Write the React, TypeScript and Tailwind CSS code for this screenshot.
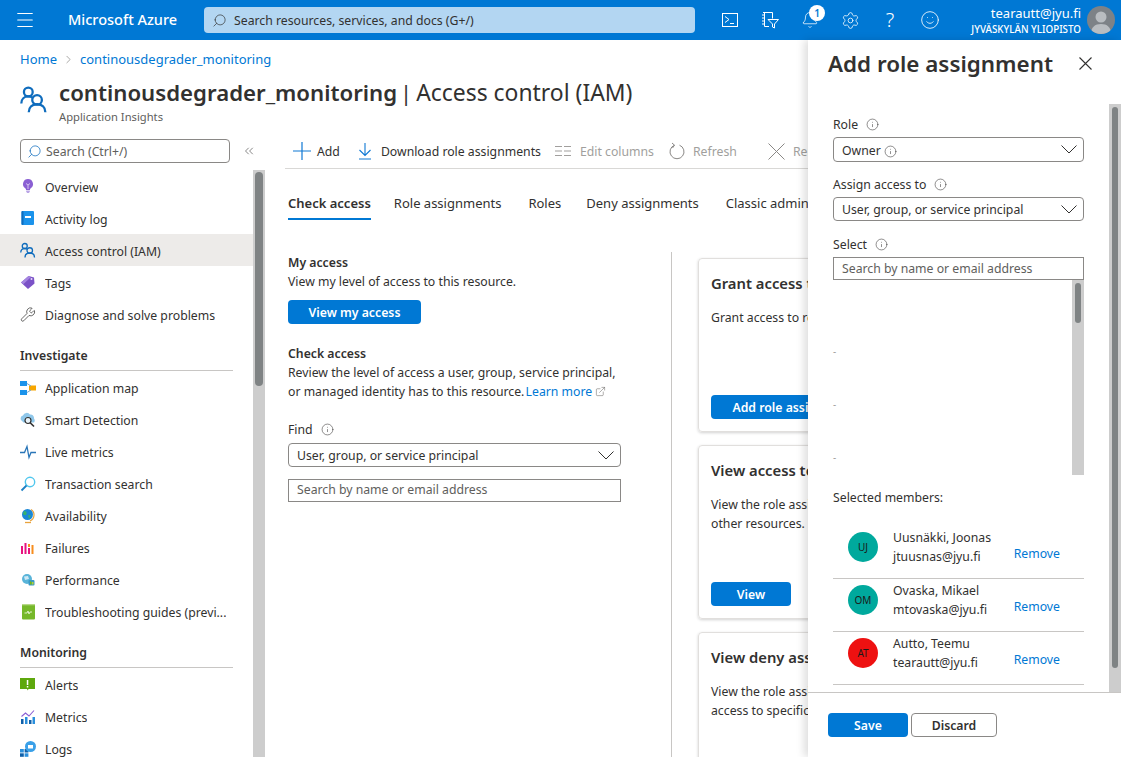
import React from 'react';
import { Menu, ChevronRight, ChevronsLeft, Search, Settings, Smile, Bell, ExternalLink, Info, Wrench } from 'lucide-react';

function PeopleIcon({ size = 16 }: { size?: number }) {
  return (
    <svg width={size} height={size} viewBox="0 0 32 32" fill="none" stroke="#0f6cbd" strokeWidth="2.6" className="shrink-0">
      <circle cx="9.5" cy="8" r="5" />
      <path d="M1.5 21c0-5 3.5-8 8-8 2 0 3.5.5 5 1.5" />
      <circle cx="19.5" cy="17" r="5.5" />
      <path d="M10 31c0-5.5 4-9 9.5-9s9.5 3.500 9.500 9" />
    </svg>
  );
}

function InfoDot() {
  return <Info size={13} strokeWidth={1} className="text-[#323130] shrink-0" />;
}

function Chevron() {
  return (
    <svg width="16" height="9" viewBox="0 0 16 9" fill="none" stroke="#323130" strokeWidth="1" className="shrink-0">
      <path d="M.5.5 8 8 15.500.5" />
    </svg>
  );
}

function BulbIcon() {
  return (
    <svg width="16" height="16" viewBox="0 0 16 16">
      <path d="M8 1a5 5 0 0 0-3 9c.6.5 1 1 1 2h4c0-1 .4-1.500 1-2a5 5 0 0 0-3-9z" fill="#8a5fd3" />
      <path d="M6.200 12.500h3.600v1.300l-1 1.200h-1.600l-1-1.200z" fill="#b9a4e6" />
      <path d="M6 5.500l2 1.500 2-1.500M8 7v4" stroke="#e6dcf8" strokeWidth=".8" fill="none" />
    </svg>
  );
}

function LogIcon() {
  return (
    <svg width="16" height="16" viewBox="0 0 16 16">
      <rect x="1.500" y="1" width="12.500" height="14" rx="1" fill="#1b93eb" />
      <rect x="1.500" y="1" width="2" height="14" rx="1" fill="#0f6cbd" />
      <rect x="5" y="6" width="6" height="2" fill="#ffffff" />
    </svg>
  );
}

function TagIcon() {
  return (
    <svg width="16" height="16" viewBox="0 0 16 16">
      <path d="M1 8.500 8.500 2 14 3.500l.5 6L8 15z" fill="#7b52c7" />
      <path d="M1 8.500 8.500 2 11 3 3.500 10z" fill="#a585e0" />
      <circle cx="11.500" cy="5" r="1" fill="#e6dcf8" />
    </svg>
  );
}

function AppMapIcon() {
  return (
    <svg width="16" height="16" viewBox="0 0 16 16">
      <rect x="0" y="1" width="7" height="5" fill="#1b93eb" />
      <rect x="0" y="10" width="7" height="5" fill="#1b93eb" />
      <rect x="9" y="5.500" width="7" height="5" fill="#f7a600" />
      <path d="M7 3.500 11 6M7 12.500l4-2.500" stroke="#7aa7c7" strokeWidth="1" />
    </svg>
  );
}

function SmartIcon() {
  return (
    <svg width="16" height="16" viewBox="0 0 16 16">
      <path d="M2 9a3 3 0 0 1 1-5.500A4 4 0 0 1 10 2.500a3.500 3.500 0 0 1 4 4c1 1 1 3 0 4H3.500z" fill="#8fc7ea" />
      <circle cx="8" cy="8.500" r="3" fill="#e9f4fb" stroke="#323130" strokeWidth="1.200" />
      <path d="M10.200 10.700 14 14.500" stroke="#323130" strokeWidth="1.600" />
    </svg>
  );
}

function LiveIcon() {
  return (
    <svg width="16" height="16" viewBox="0 0 16 16" fill="none" stroke="#2a76b8" strokeWidth="1.300">
      <path d="M0 8.500h4.500L7 2.500l2 11 2-5h5" />
    </svg>
  );
}

function TxSearchIcon() {
  return (
    <svg width="16" height="16" viewBox="0 0 16 16" fill="none">
      <circle cx="10" cy="6" r="4.700" stroke="#50c7ee" strokeWidth="1.400" />
      <path d="M6.500 9.500 1.500 14.500" stroke="#1b7fc4" strokeWidth="1.800" />
    </svg>
  );
}

function GlobeIcon() {
  return (
    <svg width="16" height="16" viewBox="0 0 16 16">
      <path d="M11 1.500a6.500 6.500 0 0 1-1 11.500" fill="none" stroke="#e8a33d" strokeWidth="1.200" />
      <circle cx="7.500" cy="6.500" r="5.500" fill="#1b87d6" />
      <path d="M4 3c2 0 3 1 2.500 3S4 7 3 6zM8 7l3 .500L9 11z" fill="#37b26c" />
      <path d="M5 14.500h6" stroke="#e8a33d" strokeWidth="1.300" />
    </svg>
  );
}

function FailuresIcon() {
  return (
    <svg width="16" height="16" viewBox="0 0 16 16">
      <rect x="1" y="6" width="2" height="8" fill="#e8127f" />
      <rect x="4.500" y="3" width="2" height="11" fill="#e8127f" />
      <rect x="8" y="8" width="2" height="6" fill="#e8127f" />
      <rect x="11.500" y="5" width="2" height="9" fill="#f78d1e" />
      <rect x="8" y="4" width="2" height="3" fill="#f78d1e" />
    </svg>
  );
}

function PerfIcon() {
  return (
    <svg width="16" height="16" viewBox="0 0 16 16">
      <circle cx="7" cy="7" r="5" fill="#59b4d9" />
      <path d="M4 4.500 8 4l1 3-4 1z" fill="#cfe9f5" />
      <rect x="8.500" y="8" width="6" height="5.500" rx="1" fill="#3999c6" />
      <rect x="10" y="9.500" width="1.500" height="3" fill="#7fba00" />
      <rect x="12" y="10" width="1.500" height="2.500" fill="#b8d432" />
    </svg>
  );
}

function GuideIcon() {
  return (
    <svg width="16" height="16" viewBox="0 0 16 16">
      <rect x="2" y="0" width="13" height="15.500" rx="1" fill="#76b82a" />
      <rect x="2" y="0" width="13" height="1.300" fill="#b8d98a" />
      <path d="M4.500 9h2.500l1-2 1 3 1-2h2" stroke="#e9f5d8" strokeWidth=".9" fill="none" />
    </svg>
  );
}

function AlertIcon() {
  return (
    <svg width="16" height="16" viewBox="0 0 16 16">
      <path d="M0 1h15v11H8.500l-.8 1.500L7 12H0z" fill="#5ea80d" />
      <rect x="6.800" y="3" width="1.500" height="5" fill="#ffffff" />
      <rect x="6.800" y="9" width="1.500" height="1.500" fill="#ffffff" />
    </svg>
  );
}

function MetricsIcon() {
  return (
    <svg width="16" height="16" viewBox="0 0 16 16">
      <rect x="1" y="10" width="2.500" height="5" fill="#0f5fa8" />
      <rect x="5" y="8" width="2.500" height="7" fill="#2a8fdc" />
      <rect x="9" y="11" width="2.500" height="4" fill="#0f5fa8" />
      <rect x="12.500" y="8" width="2.500" height="7" fill="#2a8fdc" />
      <path d="M1.500 7.500 5.500 4l3.500 3 5-5.500" stroke="#8a5fd3" strokeWidth="1.100" fill="none" />
    </svg>
  );
}

function LogsIcon() {
  return (
    <svg width="16" height="16" viewBox="0 0 16 16">
      <rect x="0" y="8" width="3.800" height="3.500" fill="#2a8fdc" />
      <rect x="4.600" y="8" width="3.800" height="3.500" fill="#0f5fa8" />
      <rect x="0" y="12.300" width="3.800" height="3.500" fill="#0f5fa8" />
      <rect x="4.600" y="12.300" width="3.800" height="3.500" fill="#2a8fdc" />
      <circle cx="10.500" cy="5.500" r="5.500" fill="#3aa0e8" />
      <rect x="8" y="4" width="5" height="3.500" fill="#ffffff" />
    </svg>
  );
}

function Item({ icon, label, active, pad = 'pt-[3px]' }: { icon: React.ReactNode; label: string; active?: boolean; pad?: string }) {
  return (
    <div className={`h-8 flex items-center gap-[9px] pl-5 text-[#323130] ${active ? 'bg-[#edebe9]' : ''}`}>
      <span className="w-4 h-4 shrink-0 flex items-center justify-center">{icon}</span>
      <span className={`truncate ${pad}`}>{label}</span>
    </div>
  );
}

function SectionHead({ label, mt }: { label: string; mt: string }) {
  return (
    <div className={`mx-5 ${mt} mb-[1px] pt-[1px] pb-[5px] border-b border-[#c8c6c4] font-semibold text-[#323130] leading-[18px]`}>
      {label}
    </div>
  );
}

function Sidebar() {
  return (
    <div className="w-[265px] shrink-0 flex flex-col min-h-0">
      <div className="flex items-center h-[24px] pl-5 shrink-0">
        <div className="w-[210px] h-6 border border-[#8a8886] rounded-sm flex items-center gap-[4px] pl-[6px] text-[#605e5c]">
          <Search size={15} strokeWidth={1.2} className="text-[#0f6cbd] -scale-x-100" />
          <span className="pt-[2px]">Search (Ctrl+/)</span>
        </div>
        <ChevronsLeft size={14} strokeWidth={1} className="ml-[12px] text-[#323130]" />
      </div>
      <div className="flex flex-1 min-h-0 mt-[7px]">
        <div className="w-[253px] overflow-hidden">
          <Item pad="pt-[5px]" icon={<BulbIcon />} label="Overview" />
          <Item pad="pt-[5px]" icon={<LogIcon />} label="Activity log" />
          <Item pad="pt-[5px]" icon={<PeopleIcon />} label="Access control (IAM)" active />
          <Item pad="pt-[5px]" icon={<TagIcon />} label="Tags" />
          <Item pad="pt-[5px]" icon={<Wrench size={17} strokeWidth={1.1} className="text-[#323130]" />} label="Diagnose and solve problems" />
          <SectionHead label="Investigate" mt="mt-[16px]" />
          <Item icon={<AppMapIcon />} label="Application map" />
          <Item icon={<SmartIcon />} label="Smart Detection" />
          <Item icon={<LiveIcon />} label="Live metrics" />
          <Item icon={<TxSearchIcon />} label="Transaction search" />
          <Item icon={<GlobeIcon />} label="Availability" />
          <Item icon={<FailuresIcon />} label="Failures" />
          <Item icon={<PerfIcon />} label="Performance" />
          <Item icon={<GuideIcon />} label="Troubleshooting guides (previ..." />
          <SectionHead label="Monitoring" mt="mt-[15px]" />
          <Item icon={<AlertIcon />} label="Alerts" />
          <Item icon={<MetricsIcon />} label="Metrics" />
          <Item icon={<LogsIcon />} label="Logs" />
        </div>
        <div className="w-3 bg-[#cdcdcd] flex justify-center">
          <div className="w-2 h-[214px] mt-[2px] rounded bg-[#7f8384]" />
        </div>
      </div>
    </div>
  );
}

function Cmd({ icon, label, muted, className }: { icon: React.ReactNode; label: string; muted?: boolean; className: string }) {
  return (
    <div className={`flex items-center ${className} whitespace-nowrap ${muted ? 'text-[#a19f9d]' : 'text-[#323130]'}`}>
      {icon}
      <span className="pt-[2px]">{label}</span>
    </div>
  );
}

function Card({ title, lines, button, btnW }: { title: string; lines: string[]; button?: string; btnW: string }) {
  return (
    <div className="h-[174px] w-[200px] border border-[#e1dfdd] rounded-sm shadow-[0_1px_3px_rgba(0,0,0,0.18)] pl-3 pt-[13px] flex flex-col whitespace-nowrap overflow-hidden shrink-0">
      <div className="text-[14.8px] font-semibold text-[#323130] leading-[22px]">{title}</div>
      <div className="mt-[14px] leading-[19px] text-[#323130]">
        {lines.map(l => <div key={l}>{l}</div>)}
      </div>
      {button && (
        <div className={`mt-auto mb-3 ${btnW} h-6 pt-[2px] bg-[#0078d4] text-white font-semibold rounded-sm flex items-center justify-center shrink-0`}>{button}</div>
      )}
    </div>
  );
}

function Content() {
  return (
    <div className="flex-1 min-w-0 flex flex-col overflow-hidden">
      <div className="ml-5 h-[30px] pb-[5px] border-b border-[#d9d8d6] flex items-center gap-4 pl-2 text-[#323130] whitespace-nowrap shrink-0">
        <Cmd className="gap-[6px] mr-[2px]" label="Add" icon={
          <svg width="18" height="18" viewBox="0 0 18 18" stroke="#0f78d4" strokeWidth="1.2"><path d="M9 0v18M0 9h18" /></svg>
        } />
        <Cmd className="gap-[9px]" label="Download role assignments" icon={
          <svg width="14" height="18" viewBox="0 0 14 18" fill="none" stroke="#0f78d4" strokeWidth="1.1"><path d="M7 1v12M1.500 8 7 13.500 12.500 8M1 17h12" /></svg>
        } />
        <Cmd muted className="gap-[9px] -ml-[2px]" label="Edit columns" icon={
          <svg width="16" height="12" viewBox="0 0 16 12" stroke="#a19f9d" strokeWidth="1.2"><path d="M0 1.500h7M0 6h7M0 10.500h7M9 1.500h7M9 6h7M9 10.500h7" /></svg>
        } />
        <Cmd muted className="gap-2 -ml-[1px]" label="Refresh" icon={
          <svg width="16" height="18" viewBox="0 0 16 18" fill="none" stroke="#8a8886" strokeWidth="1"><path d="M10.500 3.200a7 7 0 1 1-5 0M5.500 3.200 3 1M5.500 3.200 3.500 6" /></svg>
        } />
        <div className="w-px h-[18px] bg-[#d9d8d6]" />
        <Cmd muted className="gap-2 -ml-[1px]" label="Remove" icon={
          <svg width="17" height="17" viewBox="0 0 17 17" stroke="#8a8886" strokeWidth="1"><path d="M.5.5l16 16M16.500.5l-16 16" /></svg>
        } />
      </div>

      <div className="ml-[23px] mt-6 flex whitespace-nowrap shrink-0 h-[27px] text-[13px] text-[#323130]">
        <div className="font-semibold h-[27px] border-b-2 border-[#0078d4] leading-[20px]">Check access</div>
        <div className="ml-[23px] leading-[20px]">Role assignments</div>
        <div className="ml-[27px] leading-[20px]">Roles</div>
        <div className="ml-[25px] leading-[20px]">Deny assignments</div>
        <div className="ml-[27px] leading-[20px]">Classic administrators</div>
      </div>

      <div className="flex flex-1 min-h-0 ml-[23px] mt-8 text-[#323130]">
        <div className="w-[333px] shrink-0">
          <div className="font-semibold leading-[19px] pt-[1px]">My access</div>
          <div className="leading-[19px]">View my level of access to this resource.</div>
          <div className="mt-[9px] w-[133px] h-6 pt-[3px] bg-[#0078d4] text-white font-semibold rounded-sm flex items-center justify-center">View my access</div>
          <div className="mt-5 font-semibold leading-[19px]">Check access</div>
          <div className="leading-[19px] whitespace-nowrap">Review the level of access a user, group, service principal,<br />or managed identity has to this resource. <span className="text-[#0078d4] -ml-[2px]">Learn more</span> <ExternalLink size={11} strokeWidth={1.1} className="inline text-[#605e5c] -mt-0.5" /></div>
          <div className="mt-[19px] flex items-center gap-2 leading-[19px]"><span>Find</span><InfoDot /></div>
          <div className="mt-1 h-6 border border-[#8a8886] rounded-sm flex items-center justify-between pl-2 pr-[6px]"><span className="pt-[2px]">User, group, or service principal</span><Chevron /></div>
          <div className="mt-3 h-[23px] border border-[#8a8886] flex items-center pl-2 text-[#605e5c]">Search by name or email address</div>
        </div>
        <div className="ml-[50px] w-px bg-[#c8c6c4] shrink-0" />
        <div className="ml-[26px] flex flex-col gap-[13px] pt-[6px]">
          <Card title="Grant access to this resource" lines={['Grant access to resources by assigning a role.']} button="Add role assignment" btnW="w-[166px]" />
          <Card title="View access to this resource" lines={['View the role assignments that grant', 'other resources.']} button="View" btnW="w-[80px]" />
          <Card title="View deny assignments" lines={['View the role assignments that', 'access to specific resources.']} btnW="w-[80px]" />
        </div>
      </div>
    </div>
  );
}

function TopBar() {
  return (
    <div className="h-10 bg-[#0078d4] flex items-center text-white shrink-0">
      <div className="w-[50px] flex justify-center"><Menu size={22} strokeWidth={1.1} /></div>
      <div className="ml-[18px] w-[136px] text-[14.5px] font-medium whitespace-nowrap">Microsoft Azure</div>
      <div className="w-[491px] h-[26px] bg-[#b3d6f2] rounded-sm flex items-center gap-[7px] pl-2 text-[#323130] whitespace-nowrap">
        <Search size={15} strokeWidth={1.1} className="-scale-x-100" />
        <span className="pt-[2px]">Search resources, services, and docs (G+/)</span>
      </div>
      <div className="ml-[15px] flex items-center">
        <div className="w-10 flex justify-center">
          <svg width="16" height="14" viewBox="0 0 16 14" fill="none" stroke="#ffffff" strokeWidth="1">
            <rect x=".5" y=".5" width="15" height="13" />
            <path d="M3 3.500 7 6.500 3 9.500M8 10.500h4" />
          </svg>
        </div>
        <div className="w-10 flex justify-center">
          <svg width="18" height="18" viewBox="0 0 18 18" fill="none" stroke="#ffffff" strokeWidth="1">
            <path d="M2 1.500h9.500v6M3.500 1.500v14H8" />
            <path d="M1 4h2M1 7h2M1 10h2M1 13h2" />
            <path d="M7 8.500h10.500l-4 4.500v4l-2-1v-3z" />
          </svg>
        </div>
        <div className="w-10 flex justify-center relative">
          <Bell size={18} strokeWidth={1} />
          <span className="absolute -top-[6px] left-[19px] w-[16px] h-[16px] rounded-full bg-white text-[#0078d4] text-[10px] font-semibold flex items-center justify-center">1</span>
        </div>
        <div className="w-10 flex justify-center"><Settings size={19} strokeWidth={1} /></div>
        <div className="w-10 flex justify-center"><span className="text-[20px] font-light leading-none">?</span></div>
        <div className="w-10 flex justify-center"><Smile size={20} strokeWidth={1} /></div>
      </div>
      <div className="flex-1 flex flex-col items-end whitespace-nowrap mr-[6px]">
        <span className="text-[13px] leading-[18px]">tearautt@jyu.fi</span>
        <span className="text-[9.8px] leading-[13px] font-medium pt-[1px]">JYVÄSKYLÄN YLIOPISTO</span>
      </div>
      <div className="w-7 h-7 mr-[6px] rounded-full bg-[#7d8287] overflow-hidden flex items-end justify-center shrink-0">
        <svg width="28" height="28" viewBox="0 0 28 28" fill="#b9bdc1">
          <circle cx="14" cy="11" r="5.500" />
          <path d="M4 28c0-7 4-10 10-10s10 3 10 10z" />
        </svg>
      </div>
    </div>
  );
}

function Member({ initials, name, email, color }: { initials: string; name: string; email: string; color: string }) {
  return (
    <div className="h-[53px] border-b border-[#c8c6c4] flex items-start pl-[15px] pr-[24px] shrink-0">
      <div className={`mt-[6px] w-[30px] h-[30px] rounded-full ${color} text-[#1b1a19] text-[10px] flex items-center justify-center shrink-0`}>{initials}</div>
      <div className="ml-[15px] flex-1 leading-[19px] mt-[2px]">
        <div>{name}</div>
        <div>{email}</div>
      </div>
      <div className="text-[#0078d4] mt-[18px] leading-[19px]">Remove</div>
    </div>
  );
}

function Blade() {
  return (
    <div className="w-[313px] shrink-0 flex flex-col bg-white shadow-[-4px_0_8px_rgba(0,0,0,0.13)] relative text-[#323130]">
      <div className="h-[64px] shrink-0 flex items-start pl-5 pr-[29px] pt-[8px]">
        <div className="flex-1 text-[22.4px] font-semibold leading-[32px] text-[#323130] whitespace-nowrap">Add role assignment</div>
        <svg width="13" height="13" viewBox="0 0 13 13" stroke="#323130" strokeWidth="1.1" className="mt-[9px]"><path d="M.5.5l12 12M12.500.5l-12 12" /></svg>
      </div>
      <div className="flex flex-1 min-h-0">
        <div className="flex-1 pl-[25px] pr-[25px] flex flex-col pt-[11px] overflow-hidden">
          <div className="flex items-center gap-2 leading-[19px]"><span>Role</span><InfoDot /></div>
          <div className="mt-[3px] h-[25px] border border-[#8a8886] rounded-sm flex items-center justify-between pl-2 pr-[6px] shrink-0">
            <span className="flex items-center gap-[3px] pt-[3px]">Owner <InfoDot /></span>
            <Chevron />
          </div>
          <div className="mt-[13px] flex items-center gap-2 leading-[19px]"><span>Assign access to</span><InfoDot /></div>
          <div className="mt-[3px] h-6 border border-[#8a8886] rounded-sm flex items-center justify-between pl-2 pr-[6px] shrink-0">
            <span className="pt-[3px]">User, group, or service principal</span>
            <Chevron />
          </div>
          <div className="mt-[14px] flex items-center gap-2 leading-[19px]"><span>Select</span><InfoDot /></div>
          <div className="mt-[3px] h-[23px] pt-[1px] border border-[#8a8886] flex items-center pl-2 text-[#605e5c] shrink-0">Search by name or email address</div>
          <div className="h-[195px] flex shrink-0">
            <div className="flex-1 flex flex-col items-start text-[#a19f9d] text-[10px]">
              <span className="mt-[66px] leading-none">-</span>
              <span className="mt-[43px] leading-none">-</span>
              <span className="mt-[43px] leading-none">-</span>
            </div>
            <div className="w-3 bg-[#cdcdcd] flex justify-center">
              <div className="w-[6px] h-[40px] mt-[3px] rounded bg-[#7f8384]" />
            </div>
          </div>
          <div className="mt-[13px] leading-[19px] shrink-0">Selected members:</div>
          <div className="mt-[19px] flex flex-col shrink-0">
            <Member initials="UJ" name="Uusnäkki, Joonas" email="jtuusnas@jyu.fi" color="bg-[#00a99d]" />
            <Member initials="OM" name="Ovaska, Mikael" email="mtovaska@jyu.fi" color="bg-[#00a99d]" />
            <Member initials="AT" name="Autto, Teemu" email="tearautt@jyu.fi" color="bg-[#ee1111]" />
          </div>
        </div>
        <div className="w-3 bg-[#cdcdcd] flex justify-center shrink-0">
          <div className="w-[6px] h-[561px] mt-[3px] rounded bg-[#7f8384]" />
        </div>
      </div>
      <div className="h-[65px] shrink-0 border-t border-[#c8c6c4] flex items-start gap-[3px] pl-5 pt-5">
        <div className="w-20 h-6 pt-[3px] bg-[#0078d4] text-white font-semibold rounded-sm flex items-center justify-center">Save</div>
        <div className="w-[86px] h-6 pt-[3px] border border-[#8a8886] rounded-sm font-semibold flex items-center justify-center">Discard</div>
      </div>
    </div>
  );
}

export default function App() {
  return (
    <div className="font-['Noto_Sans',sans-serif] h-[757px] w-[1121px] overflow-hidden flex flex-col text-[12.25px] bg-white">
      <TopBar />
      <div className="flex flex-1 min-h-0">
        <div className="w-[808px] shrink-0 flex flex-col min-h-0 overflow-hidden">
          <div className="pl-5 pt-[10px] text-[13px] leading-[18px] text-[#0078d4] flex items-center gap-[5px] shrink-0">
            <span>Home</span>
            <ChevronRight size={13} strokeWidth={1} className="text-[#605e5c]" />
            <span>continousdegrader_monitoring</span>
          </div>
          <div className="flex pl-5 mt-[8px] shrink-0 h-[63px] whitespace-nowrap">
            <span className="mt-[9px]"><PeopleIcon size={28} /></span>
            <div className="ml-[11px]">
              <div className="flex items-baseline leading-[32px] text-[#323130]">
                <span className="text-[22.2px] font-semibold">continousdegrader_monitoring</span>
                <span className="ml-[3px] text-[22px]">|</span>
                <span className="ml-[4px] text-[22.9px]">Access control (IAM)</span>
              </div>
              <div className="text-[11.2px] leading-[16px] text-[#605e5c]">Application Insights</div>
            </div>
          </div>
          <div className="flex flex-1 min-h-0">
            <Sidebar />
            <Content />
          </div>
        </div>
        <Blade />
      </div>
    </div>
  );
}
